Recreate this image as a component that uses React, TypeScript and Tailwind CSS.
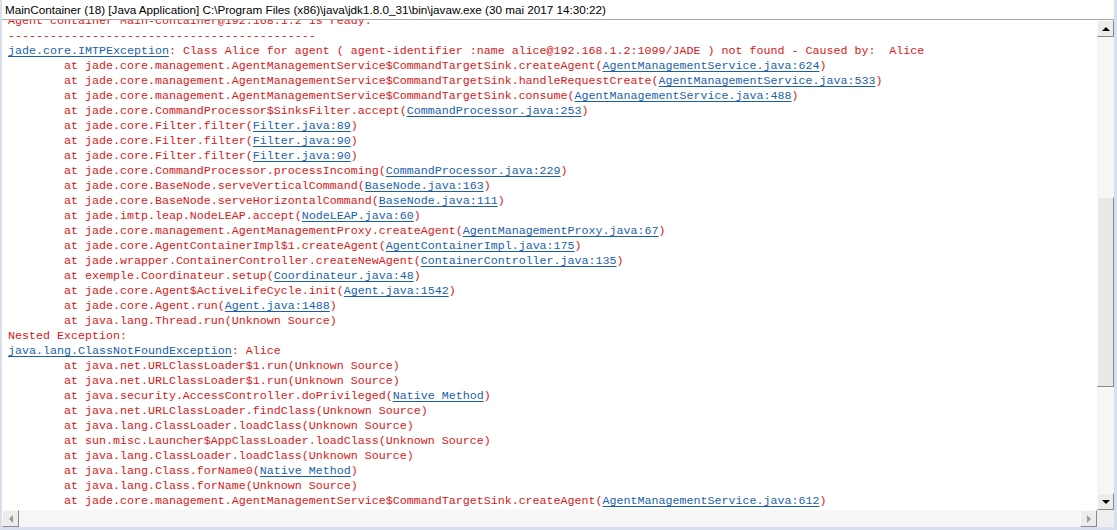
import React from "react";

type Seg = { t: string; link?: boolean };
type Line = Seg[];

const IND = "        ";
const red = (t: string): Seg => ({ t });
const lnk = (t: string): Seg => ({ t, link: true });
const at = (pre: string, link?: string): Line =>
  link
    ? [red(IND + "at " + pre + "("), lnk(link), red(")")]
    : [red(IND + "at " + pre)];

const lines: Line[] = [
  [red("Agent container Main-Container@192.168.1.2 is ready.")],
  [red("--------------------------------------------")],
  [
    lnk("jade.core.IMTPException"),
    red(": Class Alice for agent ( agent-identifier :name alice@192.168.1.2:1099/JADE ) not found - Caused by:  Alice"),
  ],
  at("jade.core.management.AgentManagementService$CommandTargetSink.createAgent", "AgentManagementService.java:624"),
  at("jade.core.management.AgentManagementService$CommandTargetSink.handleRequestCreate", "AgentManagementService.java:533"),
  at("jade.core.management.AgentManagementService$CommandTargetSink.consume", "AgentManagementService.java:488"),
  at("jade.core.CommandProcessor$SinksFilter.accept", "CommandProcessor.java:253"),
  at("jade.core.Filter.filter", "Filter.java:89"),
  at("jade.core.Filter.filter", "Filter.java:90"),
  at("jade.core.Filter.filter", "Filter.java:90"),
  at("jade.core.CommandProcessor.processIncoming", "CommandProcessor.java:229"),
  at("jade.core.BaseNode.serveVerticalCommand", "BaseNode.java:163"),
  at("jade.core.BaseNode.serveHorizontalCommand", "BaseNode.java:111"),
  at("jade.imtp.leap.NodeLEAP.accept", "NodeLEAP.java:60"),
  at("jade.core.management.AgentManagementProxy.createAgent", "AgentManagementProxy.java:67"),
  at("jade.core.AgentContainerImpl$1.createAgent", "AgentContainerImpl.java:175"),
  at("jade.wrapper.ContainerController.createNewAgent", "ContainerController.java:135"),
  at("exemple.Coordinateur.setup", "Coordinateur.java:48"),
  at("jade.core.Agent$ActiveLifeCycle.init", "Agent.java:1542"),
  at("jade.core.Agent.run", "Agent.java:1488"),
  at("java.lang.Thread.run(Unknown Source)"),
  [red("Nested Exception:")],
  [lnk("java.lang.ClassNotFoundException"), red(": Alice")],
  at("java.net.URLClassLoader$1.run(Unknown Source)"),
  at("java.net.URLClassLoader$1.run(Unknown Source)"),
  at("java.security.AccessController.doPrivileged", "Native Method"),
  at("java.net.URLClassLoader.findClass(Unknown Source)"),
  at("java.lang.ClassLoader.loadClass(Unknown Source)"),
  at("sun.misc.Launcher$AppClassLoader.loadClass(Unknown Source)"),
  at("java.lang.ClassLoader.loadClass(Unknown Source)"),
  at("java.lang.Class.forName0", "Native Method"),
  at("java.lang.Class.forName(Unknown Source)"),
  at("jade.core.management.AgentManagementService$CommandTargetSink.createAgent", "AgentManagementService.java:612"),
];

function Tri({ dir, color }: { dir: "up" | "down" | "left" | "right"; color: string }) {
  const pts: Record<string, string> = {
    up: "0,4 4,0 8,4",
    down: "0,0 8,0 4,4",
    left: "4,0 4,8 0,4",
    right: "0,0 0,8 4,4",
  };
  const w = dir === "up" || dir === "down" ? 8 : 4;
  const h = dir === "up" || dir === "down" ? 4 : 8;
  return (
    <svg width={w} height={h} viewBox={`0 0 ${w} ${h}`}>
      <polygon points={pts[dir]} fill={color} />
    </svg>
  );
}

function Btn({ children }: { children: React.ReactNode }) {
  return (
    <div className="w-[17px] h-[17px] shrink-0 flex items-center justify-center bg-[#ececec] border-t border-l border-t-[#fafafa] border-l-[#fafafa] border-r border-b border-r-[#8a8a8a] border-b-[#8a8a8a]">
      {children}
    </div>
  );
}

export default function App() {
  return (
    <div className="w-[1117px] h-[530px] bg-[#d6dfeb] pl-[2px] pr-[3px] pb-[3px] flex flex-col overflow-hidden">
      <div className="flex-1 flex flex-col bg-white min-h-0">
        <div
          className="h-[20px] shrink-0 border-b border-[#a9a9a9] pl-[3px] text-[11.7px] leading-[19px] text-black whitespace-pre"
          style={{ fontFamily: "'Liberation Sans', Arial, sans-serif" }}
        >
          MainContainer (18) [Java Application] C:\Program Files (x86)\java\jdk1.8.0_31\bin\javaw.exe (30 mai 2017 14:30:22)
        </div>
        <div className="flex-1 flex min-h-0">
          <div className="flex-1 overflow-hidden relative">
            <div
              className="mt-[-6px] pl-[6px] text-[11.67px] leading-[15px] text-[#d81818] whitespace-pre"
              style={{ fontFamily: "'Liberation Mono', 'DejaVu Sans Mono', monospace" }}
            >
              {lines.map((ln, i) => (
                <div key={i} className="h-[15px]">
                  {ln.map((s, j) =>
                    s.link ? (
                      <span key={j} className="text-[#1a5fae] underline decoration-1 underline-offset-2">
                        {s.t}
                      </span>
                    ) : (
                      <span key={j}>{s.t}</span>
                    )
                  )}
                </div>
              ))}
            </div>
          </div>
          <div className="w-[17px] shrink-0 flex flex-col bg-[#f6f6f6]">
            <Btn>
              <Tri dir="up" color="#000" />
            </Btn>
            <div className="h-[160px] shrink-0" />
            <div className="h-[190px] shrink-0 bg-[#e9e9e9] border-t border-l border-t-[#fafafa] border-l-[#fafafa] border-r border-b border-r-[#8a8a8a] border-b-[#8a8a8a]" />
            <div className="flex-1" />
            <Btn>
              <Tri dir="down" color="#000" />
            </Btn>
          </div>
        </div>
        <div className="h-[17px] shrink-0 flex bg-[#f6f6f6]">
          <Btn>
            <Tri dir="left" color="#9a9a9a" />
          </Btn>
          <div className="flex-1" />
          <Btn>
            <Tri dir="right" color="#9a9a9a" />
          </Btn>
          <div className="w-[17px] h-[17px] shrink-0 bg-[#efefef]" />
        </div>
      </div>
    </div>
  );
}
